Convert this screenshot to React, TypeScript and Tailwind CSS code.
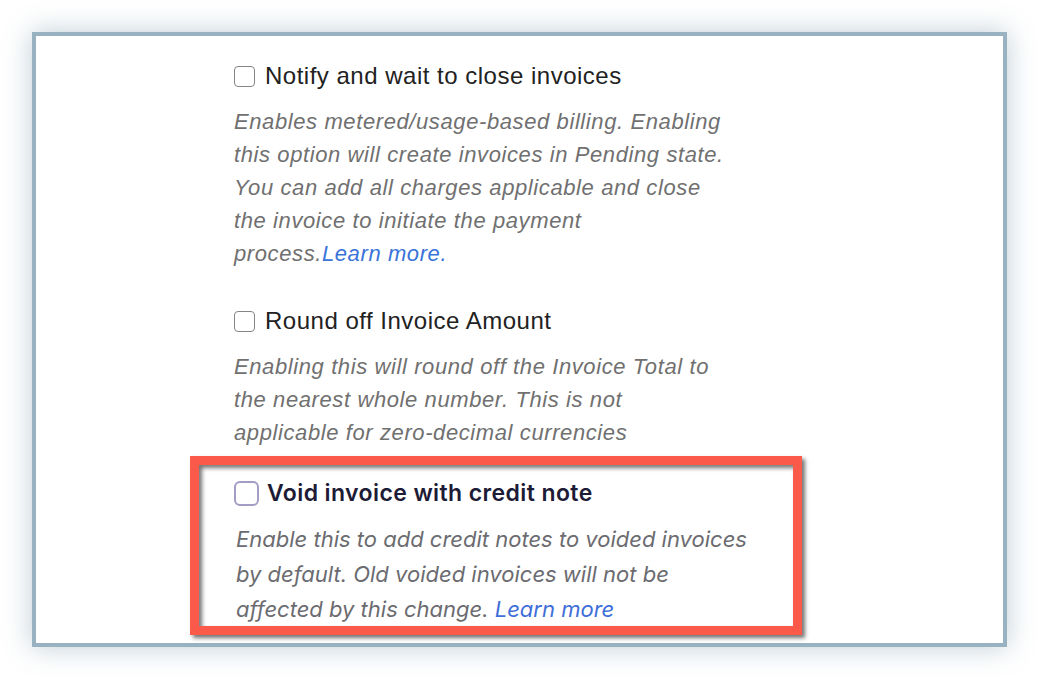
import React from 'react'

type Option = {
  title: string
  lines: React.ReactNode[]
}

const options: Option[] = [
  {
    title: 'Notify and wait to close invoices',
    lines: [
      'Enables metered/usage-based billing. Enabling',
      'this option will create invoices in Pending state.',
      'You can add all charges applicable and close',
      'the invoice to initiate the payment',
      <>process.<span className="text-[#3a73d9]">Learn more.</span></>,
    ],
  },
  {
    title: 'Round off Invoice Amount',
    lines: [
      'Enabling this will round off the Invoice Total to',
      'the nearest whole number. This is not',
      'applicable for zero-decimal currencies',
    ],
  },
]

function LegacyOption({ o, first }: { o: Option; first?: boolean }) {
  return (
    <div className={first ? '' : 'mt-[37px]'}>
      <label className="flex h-[28px] items-center gap-[10px]">
        <span className="h-[21px] w-[21px] shrink-0 rounded-[4px] border-[1.5px] border-[#858585] bg-white" />
        <span className="whitespace-nowrap text-[24px] leading-[28px] tracking-[0.5px] text-[#222]">{o.title}</span>
      </label>
      <div className="mt-[15px] whitespace-nowrap text-[22px] italic leading-[33px] tracking-[0.6px] text-[#707070]">
        {o.lines.map((l, i) => (
          <div key={i}>{l}</div>
        ))}
      </div>
    </div>
  )
}

export default function App() {
  return (
    <div className="min-h-[680px] w-[1040px] bg-white p-[32px]" style={{ fontFamily: '"Liberation Sans", Arial, sans-serif' }}>
      <div className="h-[615px] w-[975px] border-4 border-[#98b2c1] bg-white shadow-[0_0_26px_rgba(70,110,135,0.35)]">
        <div className="pl-[198px] pt-[26px]">
          {options.map((o, i) => (
            <LegacyOption key={o.title} o={o} first={i === 0} />
          ))}

          {/* highlighted option */}
          <div className="-ml-[44px] mt-[7px] h-[179px] w-[612px] border-[9px] border-[#fb5a4b] pl-[35px] pt-[16px] shadow-[3px_3px_4px_rgba(0,0,0,0.55),inset_3px_3px_4px_rgba(0,0,0,0.55)]">
            <label className="flex h-[25px] items-center gap-[8px]" style={{ fontFamily: 'Inter, "Noto Sans", sans-serif' }}>
              <span className="h-[25px] w-[25px] shrink-0 rounded-[6px] border-2 border-[#a19dc4] bg-white" />
              <span className="whitespace-nowrap text-[23px] font-semibold tracking-[0.4px] text-[#1d1b36]">Void invoice with credit note</span>
            </label>
            <div className="mt-[16px] whitespace-nowrap pl-[2px] text-[22px] italic leading-[35px] text-[#6b6b70]" style={{ fontFamily: 'Inter, "Noto Sans", sans-serif' }}>
              <div>Enable this to add credit notes to voided invoices</div>
              <div>by default. Old voided invoices will not be</div>
              <div>
                affected by this change. <span className="text-[#3f6fd8]">Learn more</span>
              </div>
            </div>
          </div>
        </div>
      </div>
    </div>
  )
}
